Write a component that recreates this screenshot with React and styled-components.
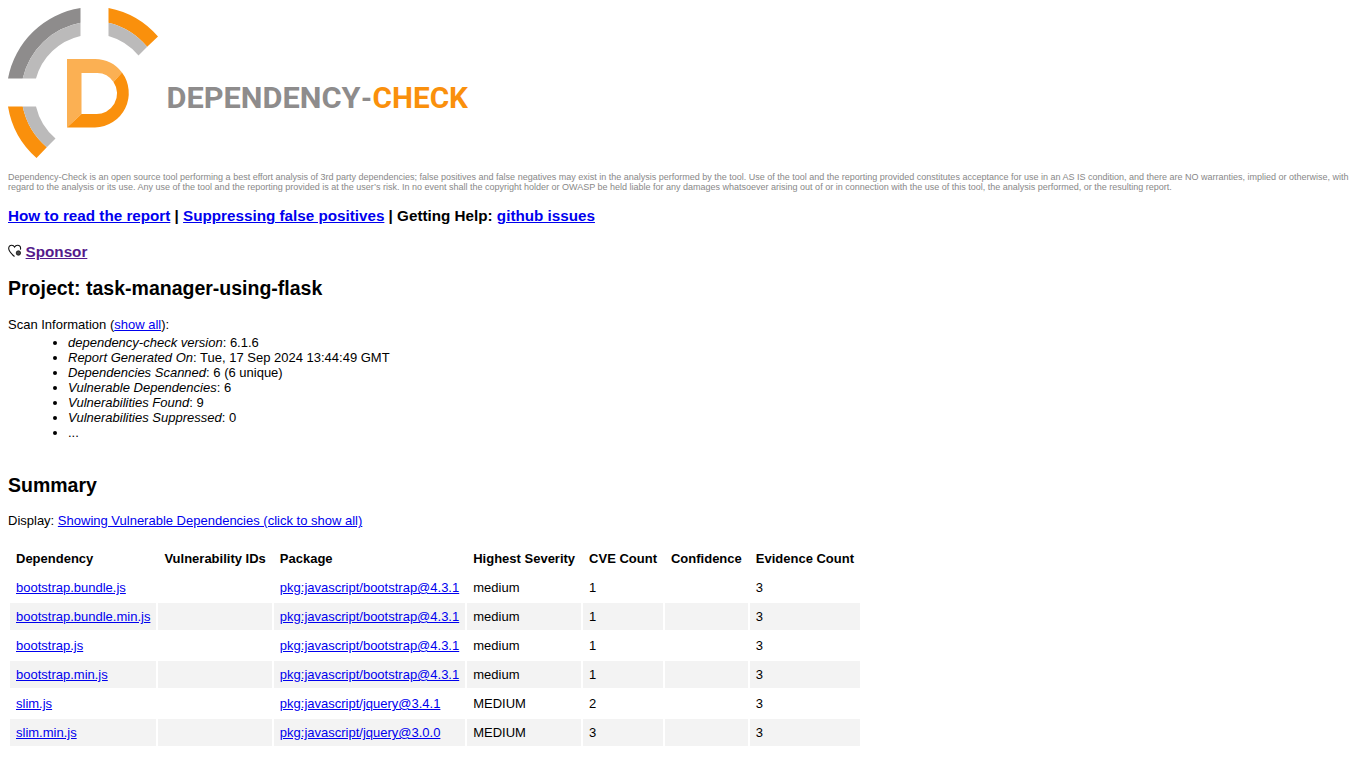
import React from 'react';
import styled, { createGlobalStyle } from 'styled-components';

const GlobalStyle = createGlobalStyle`
  html, body {
    overflow: hidden;
    height: 768px;
  }
  body {
    margin: 0;
    padding: 8px;
    background-color: #fff;
    color: #000;
    font-family: "Liberation Sans", Arial, sans-serif;
    font-size: 13px;
  }
`;

const Logo = styled.svg`
  display: block;
  width: 460px;
  height: 151px;
`;
const Disclaimer = styled.p`
  margin: 13px 0 0;
  font-size: 9px;
  line-height: 10px;
  color: #888;
`;
const LinkBar = styled.h3`
  margin: ${(p) => p.$top}px 0 0;
  font-size: 15.23px;
  line-height: 17px;
  font-weight: bold;
`;
const Link = styled.a`
  color: ${(p) => (p.$visited ? '#551a8b' : '#00e')};
  text-decoration: underline;
`;
const HeartIcon = styled.svg`
  width: 14px;
  height: 14px;
  margin-right: 3.6px;
  vertical-align: -1px;
`;
const SectionTitle = styled.h2`
  margin: ${(p) => p.$top}px 0 0;
  font-size: 19.5px;
  line-height: 23px;
  font-weight: bold;
`;
const Line = styled.div`
  margin-top: ${(p) => p.$top}px;
  line-height: 15px;
`;
const ScanList = styled.ul`
  margin: 3px 0 0;
  padding-left: 60px;
  line-height: 15px;
`;
const Table = styled.table`
  margin-top: 15px;
  border-collapse: separate;
  border-spacing: 2px;
  font-size: 13px;
`;
const HeadCell = styled.th`
  height: 27px;
  padding: 0 6px;
  text-align: left;
  font-weight: bold;
  white-space: nowrap;
`;
const Row = styled.tr`
  background-color: ${(p) => (p.$odd ? '#f3f3f3' : '#fff')};
`;
const Cell = styled.td`
  height: 27px;
  padding: 0 6px;
  white-space: nowrap;
`;

const scanInfo = [
  ['dependency-check version', '6.1.6'],
  ['Report Generated On', 'Tue, 17 Sep 2024 13:44:49 GMT'],
  ['Dependencies Scanned', '6 (6 unique)'],
  ['Vulnerable Dependencies', '6'],
  ['Vulnerabilities Found', '9'],
  ['Vulnerabilities Suppressed', '0'],
];

const columns = ['Dependency', 'Vulnerability IDs', 'Package', 'Highest Severity', 'CVE Count', 'Confidence', 'Evidence Count'];

const rows = [
  ['bootstrap.bundle.js', 'pkg:javascript/bootstrap@4.3.1', 'medium', 1],
  ['bootstrap.bundle.min.js', 'pkg:javascript/bootstrap@4.3.1', 'medium', 1],
  ['bootstrap.js', 'pkg:javascript/bootstrap@4.3.1', 'medium', 1],
  ['bootstrap.min.js', 'pkg:javascript/bootstrap@4.3.1', 'medium', 1],
  ['slim.js', 'pkg:javascript/jquery@3.4.1', 'MEDIUM', 2],
  ['slim.min.js', 'pkg:javascript/jquery@3.0.0', 'MEDIUM', 3],
];

function DependencyLogo() {
  return (
    <Logo viewBox="8 8 460 151">
      {/* upper left arc */}
      <path d="M80.5 8 A87.5 87.5 0 0 0 8 78.5 L22.7 78.5 A73 73 0 0 1 80.5 22.7 Z" fill="#8e8c8c" />
      <path d="M80.5 22.7 A73 73 0 0 0 22.7 78.5 L36 78.5 A60 60 0 0 1 80.5 36 Z" fill="#bbbaba" />
      {/* upper right arc */}
      <path d="M108.5 8 A87.5 87.5 0 0 1 158 36.5 L147.2 46.8 A73 73 0 0 0 108.5 22.7 Z" fill="#fa900c" />
      <path d="M108.5 22.7 A73 73 0 0 1 147.2 46.8 L138.5 55.5 A60 60 0 0 0 108.5 36 Z" fill="#bbbaba" />
      {/* lower left arc */}
      <path d="M8 106.5 A87.5 87.5 0 0 0 36.5 158 L46.8 147.2 A73 73 0 0 1 22.7 106.5 Z" fill="#fa900c" />
      <path d="M22.7 106.5 A73 73 0 0 0 46.8 147.2 L55.5 138.5 A60 60 0 0 1 36 106.5 Z" fill="#bbbaba" />
      {/* the D */}
      <path d="M67 59 L95 59 A34.5 34.5 0 0 1 122 72.5 L113.5 82 A20 20 0 0 0 95 73 L81.5 73 L81.5 114 L67 127.5 Z" fill="#fbb053" />
      <path d="M67 127.5 L81.5 114 L95 114 A20.5 20.5 0 0 0 113.5 82 L122 72.5 A34.5 34.5 0 0 1 95 127.5 Z" fill="#fa900c" />
      {/* wordmark, each part fitted to its own width */}
      <text x="166.5" y="108" fill="#8e8c8c" fontFamily="Roboto, sans-serif" fontWeight="700" fontSize="29.5" textLength="194" lengthAdjust="spacingAndGlyphs">DEPENDENCY</text>
      <text x="361" y="108" fill="#8e8c8c" fontFamily="Roboto, sans-serif" fontWeight="700" fontSize="29.5" textLength="11" lengthAdjust="spacingAndGlyphs">-</text>
      <text x="372.5" y="108" fill="#fa900c" fontFamily="Roboto, sans-serif" fontWeight="700" fontSize="29.5" textLength="95.5" lengthAdjust="spacingAndGlyphs">CHECK</text>
    </Logo>
  );
}

function SponsorHeart() {
  return (
    <HeartIcon viewBox="0 0 14 14">
      <path d="M6.5 12.5 C3.5 10 .7 7.6 .7 4.6 C.7 2.6 2.1 1.2 3.8 1.2 C5 1.2 6 1.9 6.6 3 C7.2 1.9 8.3 1.2 9.5 1.2 C11.3 1.2 12.6 2.6 12.6 4.4 C12.6 4.8 12.5 5.2 12.4 5.6" fill="none" stroke="#111" strokeWidth="1.1" />
      <circle cx="10.4" cy="9" r="2.2" fill="#444" stroke="#111" strokeWidth="0.8" />
    </HeartIcon>
  );
}

export default function App() {
  return (
    <>
      <GlobalStyle />
      <DependencyLogo />
      <Disclaimer>
        Dependency-Check is an open source tool performing a best effort analysis of 3rd party dependencies; false positives and false negatives may exist in the analysis performed by the tool. Use of the tool and the reporting provided constitutes acceptance for use in an AS IS condition, and there are NO warranties, implied or otherwise, with regard to the analysis or its use. Any use of the tool and the reporting provided is at the user’s risk. In no event shall the copyright holder or OWASP be held liable for any damages whatsoever arising out of or in connection with the use of this tool, the analysis performed, or the resulting report.
      </Disclaimer>
      <LinkBar $top={15}>
        <Link href="#">How to read the report</Link> | <Link href="#">Suppressing false positives</Link> | Getting Help: <Link href="#">github issues</Link>
      </LinkBar>
      <LinkBar $top={19}>
        <SponsorHeart />
        <Link href="#" $visited>Sponsor</Link>
      </LinkBar>
      <SectionTitle $top={17}>Project: task-manager-using-flask</SectionTitle>
      <Line $top={17}>
        Scan Information (<Link href="#">show all</Link>):
      </Line>
      <ScanList>
        {scanInfo.map(([label, value]) => (
          <li key={label}><i>{label}</i>: {value}</li>
        ))}
        <li>...</li>
      </ScanList>
      <SectionTitle $top={34}>Summary</SectionTitle>
      <Line $top={16}>
        Display: <Link href="#">Showing Vulnerable Dependencies (click to show all)</Link>
      </Line>
      <Table>
        <thead>
          <tr>
            {columns.map((c) => <HeadCell key={c}>{c}</HeadCell>)}
          </tr>
        </thead>
        <tbody>
          {rows.map(([name, pkg, severity, count], i) => (
            <Row key={name} $odd={i % 2 === 1}>
              <Cell><Link href="#">{name}</Link></Cell>
              <Cell></Cell>
              <Cell><Link href="#">{pkg}</Link></Cell>
              <Cell>{severity}</Cell>
              <Cell>{count}</Cell>
              <Cell></Cell>
              <Cell>3</Cell>
            </Row>
          ))}
        </tbody>
      </Table>
      <SectionTitle $top={17}>Dependencies</SectionTitle>
    </>
  );
}
